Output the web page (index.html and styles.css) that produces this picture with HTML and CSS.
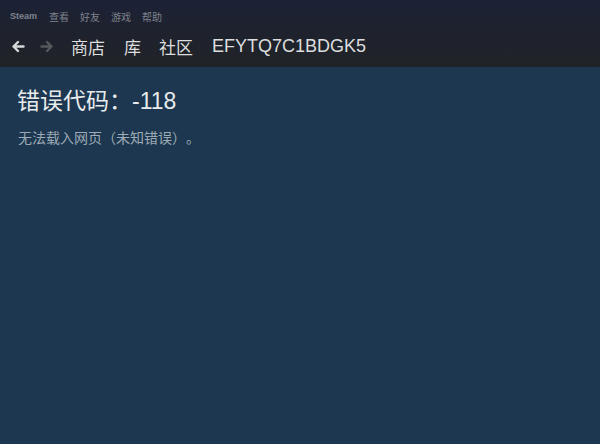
FILE: index.html
```html
<!DOCTYPE html>
<html lang="zh-CN">
<head>
<meta charset="utf-8">
<link rel="stylesheet" href="styles.css">
</head>
<body>
<header class="top">
  <nav class="menu">
    <span class="menu-item steam">Steam</span>
    <span class="menu-item">查看</span>
    <span class="menu-item">好友</span>
    <span class="menu-item">游戏</span>
    <span class="menu-item">帮助</span>
  </nav>
  <div class="nav">
    <span class="arrow back">
      <svg width="14" height="13" viewBox="0 0 14 13"><path d="M12.5 6.5H2.5 M7 2L2.5 6.5L7 11" fill="none" stroke="#d6d8da" stroke-width="2.4" stroke-linecap="round" stroke-linejoin="round"/></svg>
    </span>
    <span class="arrow fwd">
      <svg width="14" height="13" viewBox="0 0 14 13"><path d="M1.5 6.5H11.5 M7 2L11.5 6.5L7 11" fill="none" stroke="#55585d" stroke-width="2.4" stroke-linecap="round" stroke-linejoin="round"/></svg>
    </span>
    <span class="tab t-store">商店</span>
    <span class="tab t-lib">库</span>
    <span class="tab t-comm">社区</span>
    <span class="tab t-user">EFYTQ7C1BDGK5</span>
  </div>
</header>
<main class="content">
  <h1 class="err-title">错误代码：-118</h1>
  <p class="err-text">无法载入网页（未知错误）。</p>
</main>
</body>
</html>
```
FILE: styles.css
```css
html, body {
  margin: 0;
  padding: 0;
  width: 600px;
  height: 444px;
  overflow: hidden;
  background: #1c374f;
  font-family: "Liberation Sans", Arial, "Noto Sans CJK SC", sans-serif;
}
.top {
  height: 67px;
  background: linear-gradient(to bottom, #1b2236 0%, #1e2230 35%, #202326 100%);
  display: flex;
  flex-direction: column;
}
.menu {
  display: flex;
  align-items: center;
  height: 30px;
  padding-left: 10px;
  padding-top: 2px;
  box-sizing: border-box;
}
.menu-item {
  font-size: 10px;
  color: #7f838d;
  margin-right: 11px;
  font-family: "Noto Sans CJK SC", sans-serif;
}
.menu-item.steam {
  font-family: "Liberation Sans", Arial, sans-serif;
  font-weight: bold;
  font-size: 9px;
  margin-right: 12px;
}
.nav {
  display: flex;
  align-items: center;
  height: 32px;
  padding-left: 11px;
}
.arrow {
  display: flex;
  width: 14px;
  height: 13px;
}
.arrow.back { margin-right: 15px; }
.arrow.fwd { margin-right: 17px; }
.tab {
  font-size: 17px;
  color: #dcdedf;
  font-family: "Noto Sans CJK SC", sans-serif;
}
.t-store { margin-right: 19px; }
.t-lib { margin-right: 18px; }
.t-comm { margin-right: 19px; }
.t-user {
  font-family: "Liberation Sans", Arial, sans-serif;
  font-size: 18px;
}
.content {
  padding: 17px 17px 0 17px;
}
.err-title {
  margin: 0;
  font-weight: normal;
  font-size: 23px;
  line-height: 34px;
  color: #e8ebec;
  text-spacing-trim: space-all;
  font-family: "Liberation Sans", Arial, "Noto Sans CJK SC", sans-serif;
}
.err-text {
  margin: 10px 0 0 1px;
  font-size: 14px;
  line-height: 18px;
  color: #9eaab5;
  text-spacing-trim: space-all;
  font-family: "Noto Sans CJK SC", sans-serif;
}
```
